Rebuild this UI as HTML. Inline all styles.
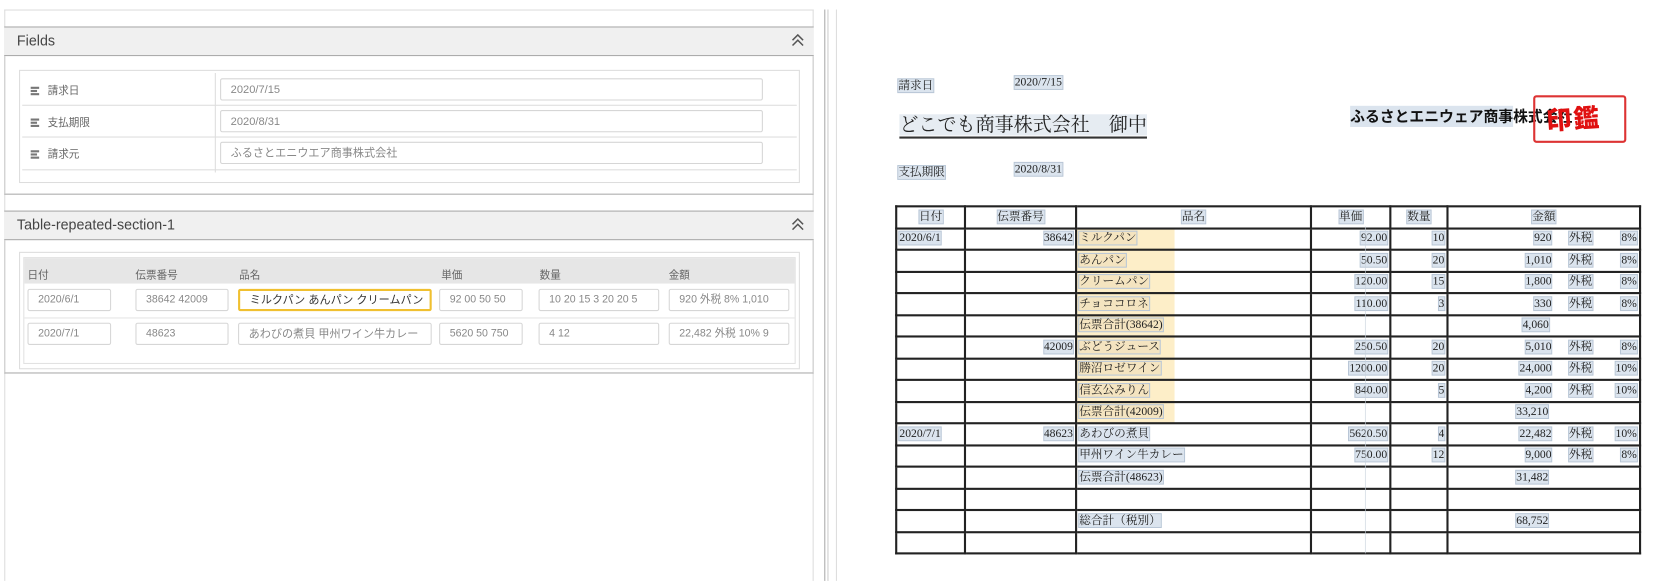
<!DOCTYPE html>
<html><head><meta charset="utf-8">
<style>
*{box-sizing:border-box;margin:0;padding:0}
body{width:1659px;height:577px;background:#fff;position:relative;overflow:hidden;font-family:"Liberation Sans","Noto Sans CJK JP",sans-serif;color:#555}
#w{position:absolute;left:0;top:0;width:1568px;height:546px;transform:scale(1.0581);transform-origin:0 0}
.abs{position:absolute}
.hdr{position:absolute;left:4px;width:765px;height:28px;background:#f0f0f0;border-top:1px solid #aaa;border-bottom:1px solid #aaa;font-size:13.5px;color:#444;padding:5px 12px}
.chev{position:absolute;right:9px;top:5px;width:12px;height:14px}
.inp{position:absolute;height:21px;border:1px solid #d6d6d6;border-radius:2px;font-size:10.5px;color:#888;padding:4px 9px 0;white-space:nowrap;overflow:hidden;background:#fff;line-height:12px}
.lbl{position:absolute;font-size:10px;color:#666}
.lbl i{display:inline-block;width:8px;height:8px;border-top:2px solid #777;border-bottom:2px solid #777;margin-right:8px;vertical-align:-1px;position:relative}
.lbl i:after{content:"";position:absolute;left:0;top:1px;width:6px;height:2px;background:#777}
.hl{position:absolute;height:1px;background:#ddd}
.doc{font-family:"Liberation Serif","Noto Serif CJK JP",serif;color:#222}
.b{background:#dbe4ee;outline:1px solid #b8c6d6}
table.t{position:absolute;left:846px;top:194px;border-collapse:collapse;font-family:"Liberation Serif","Noto Serif CJK JP",serif;font-size:11px;color:#222}
table.t td{border:2px solid #222;height:20.5px;padding:0 2px;white-space:nowrap;line-height:13px}
.r{text-align:right}.c{text-align:center}
.yy{background:linear-gradient(90deg,#fdeec8 92px,#fff 92px)}
.yy .b{background:#f4e4c0}
</style></head><body><div id="w">
<svg width="0" height="0" style="position:absolute"><defs><g id="ch"><path d="M1 7 L6 2 L11 7 M1 12 L6 7 L11 12" fill="none" stroke="#555" stroke-width="1.4"/></g></defs></svg>
<!-- left panel -->
<div class="abs" style="left:4px;top:9px;width:765px;height:540px;border:1px solid #ddd;border-bottom:none"></div>
<div class="hdr" style="top:25px">Fields<svg class="chev"><use href="#ch"/></svg></div>
<div class="abs" style="left:4px;top:53px;width:765px;height:131px;border-left:1px solid #ccc;border-right:1px solid #ccc;border-bottom:1px solid #aaa"></div>
<div class="abs" style="left:18px;top:66px;width:738px;height:107px;border:1px solid #ddd"></div>
<div class="abs" style="left:203px;top:69px;width:1px;height:94px;background:#ddd"></div>
<div class="hl" style="left:21px;top:99px;width:732px"></div>
<div class="hl" style="left:21px;top:129px;width:732px"></div>
<div class="hl" style="left:21px;top:160px;width:732px"></div>
<div class="lbl" style="left:29px;top:77px"><i></i>請求日</div>
<div class="lbl" style="left:29px;top:107px"><i></i>支払期限</div>
<div class="lbl" style="left:29px;top:137px"><i></i>請求元</div>
<div class="inp" style="left:208px;top:74px;width:513px">2020/7/15</div>
<div class="inp" style="left:208px;top:104px;width:513px">2020/8/31</div>
<div class="inp" style="left:208px;top:134px;width:513px">ふるさとエニウエア商事株式会社</div>

<div class="hdr" style="top:199px">Table-repeated-section-1<svg class="chev"><use href="#ch"/></svg></div>
<div class="abs" style="left:4px;top:227px;width:765px;height:126px;border-left:1px solid #ccc;border-right:1px solid #ccc;border-bottom:1px solid #aaa"></div>
<div class="abs" style="left:18px;top:238px;width:738px;height:111px;border:1px solid #ddd"></div>
<div class="abs" style="left:22px;top:243px;width:730px;height:101px;border:1px solid #e2e2e2"></div>
<div class="abs" style="left:23px;top:244px;width:728px;height:24px;background:#e6e6e6"></div>
<div class="hl" style="left:23px;top:300px;width:728px;background:#e4e4e4"></div>
<div class="lbl" style="left:26px;top:251px">日付</div>
<div class="lbl" style="left:128px;top:251px">伝票番号</div>
<div class="lbl" style="left:226px;top:251px">品名</div>
<div class="lbl" style="left:417px;top:251px">単価</div>
<div class="lbl" style="left:510px;top:251px">数量</div>
<div class="lbl" style="left:632px;top:251px">金額</div>
<div class="inp" style="left:26px;top:273px;width:79px;font-size:10px">2020/6/1</div>
<div class="inp" style="left:128px;top:273px;width:88px;font-size:10px">38642 42009</div>
<div class="inp" style="left:225px;top:273px;width:183px;border:2px solid #f0c030;color:#333;font-size:10.5px;padding-top:3px">ミルクパン あんパン クリームパン</div>
<div class="inp" style="left:415px;top:273px;width:79px;font-size:10px">92 00 50 50</div>
<div class="inp" style="left:509px;top:273px;width:114px;font-size:10px">10 20 15 3 20 20 5</div>
<div class="inp" style="left:632px;top:273px;width:114px;font-size:10px">920 外税 8% 1,010</div>
<div class="inp" style="left:26px;top:305px;width:79px;font-size:10px">2020/7/1</div>
<div class="inp" style="left:128px;top:305px;width:88px;font-size:10px">48623</div>
<div class="inp" style="left:225px;top:305px;width:183px;font-size:10.5px">あわびの煮貝 甲州ワイン牛カレー</div>
<div class="inp" style="left:415px;top:305px;width:79px;font-size:10px">5620 50 750</div>
<div class="inp" style="left:509px;top:305px;width:114px;font-size:10px">4 12</div>
<div class="inp" style="left:632px;top:305px;width:114px;font-size:10px">22,482 外税 10% 9</div>

<!-- separator -->
<div class="abs" style="left:779px;top:9px;width:1px;height:540px;background:#aaa"></div>
<div class="abs" style="left:782px;top:9px;width:1px;height:540px;background:#ccc"></div>
<div class="abs" style="left:790px;top:9px;width:1px;height:540px;background:#ddd"></div>

<!-- document -->
<div class="doc abs" style="left:849px;top:72px;font-size:11px"><span class="b">請求日</span></div>
<div class="doc abs" style="left:959px;top:72px;font-size:11px"><span class="b">2020/7/15</span></div>
<div class="doc abs" style="left:850px;top:107px;font-size:18px;border-bottom:2px solid #333;line-height:22px"><span style="background:#e6ecf2">どこでも商事株式会社　御中</span></div>
<div class="doc abs" style="left:849px;top:154px;font-size:11px"><span class="b">支払期限</span></div>
<div class="doc abs" style="left:959px;top:154px;font-size:11px"><span class="b">2020/8/31</span></div>
<div class="abs" style="left:1276px;top:101px;font-size:14px;font-weight:bold;color:#111;font-family:'Noto Sans CJK JP',sans-serif;line-height:18px;white-space:nowrap"><span style="background:#dbe4ee">ふるさとエニウェア商事</span>株式会社</div>
<div class="abs" style="left:1449px;top:90px;width:88px;height:45px;border:2px solid #d33;border-radius:3px"></div>
<div class="abs" style="left:1461px;top:96px;font-size:24px;color:#e01010;font-weight:900;font-family:'Noto Sans CJK JP',sans-serif;line-height:30px;letter-spacing:2px;transform:rotate(-4deg)">印鑑</div>

<table class="t">
<colgroup><col style="width:65px"><col style="width:105px"><col style="width:222px"><col style="width:75px"><col style="width:54px"><col style="width:182px"></colgroup>
<tr><td class="c"><span class="b">日付</span></td><td class="c"><span class="b">伝票番号</span></td><td class="c"><span class="b">品名</span></td><td class="c"><span class="b">単価</span></td><td class="c"><span class="b">数量</span></td><td class="c"><span class="b">金額</span></td></tr>
<tr><td><span class="b">2020/6/1</span></td><td class="r"><span class="b">38642</span></td><td class="yy"><span class="b">ミルクパン</span></td><td class="r"><span class="b">92.00</span></td><td class="r"><span class="b">10</span></td><td class="r"><span class="b">920</span>&nbsp;&nbsp;&nbsp;&nbsp;&nbsp;&nbsp;<span class="b">外税</span>&nbsp;&nbsp;&nbsp;&nbsp;&nbsp;&nbsp;&nbsp;&nbsp;&nbsp;&nbsp;<span class="b">8%</span></td></tr>
<tr><td></td><td></td><td class="yy"><span class="b">あんパン</span></td><td class="r"><span class="b">50.50</span></td><td class="r"><span class="b">20</span></td><td class="r"><span class="b">1,010</span>&nbsp;&nbsp;&nbsp;&nbsp;&nbsp;&nbsp;<span class="b">外税</span>&nbsp;&nbsp;&nbsp;&nbsp;&nbsp;&nbsp;&nbsp;&nbsp;&nbsp;&nbsp;<span class="b">8%</span></td></tr>
<tr><td></td><td></td><td class="yy"><span class="b">クリームパン</span></td><td class="r"><span class="b">120.00</span></td><td class="r"><span class="b">15</span></td><td class="r"><span class="b">1,800</span>&nbsp;&nbsp;&nbsp;&nbsp;&nbsp;&nbsp;<span class="b">外税</span>&nbsp;&nbsp;&nbsp;&nbsp;&nbsp;&nbsp;&nbsp;&nbsp;&nbsp;&nbsp;<span class="b">8%</span></td></tr>
<tr><td></td><td></td><td class="yy"><span class="b">チョココロネ</span></td><td class="r"><span class="b">110.00</span></td><td class="r"><span class="b">3</span></td><td class="r"><span class="b">330</span>&nbsp;&nbsp;&nbsp;&nbsp;&nbsp;&nbsp;<span class="b">外税</span>&nbsp;&nbsp;&nbsp;&nbsp;&nbsp;&nbsp;&nbsp;&nbsp;&nbsp;&nbsp;<span class="b">8%</span></td></tr>
<tr><td></td><td></td><td class="yy"><span class="b">伝票合計(38642)</span></td><td></td><td></td><td style="padding-left:70px"><span class="b">4,060</span></td></tr>
<tr><td></td><td class="r"><span class="b">42009</span></td><td class="yy"><span class="b">ぶどうジュース</span></td><td class="r"><span class="b">250.50</span></td><td class="r"><span class="b">20</span></td><td class="r"><span class="b">5,010</span>&nbsp;&nbsp;&nbsp;&nbsp;&nbsp;&nbsp;<span class="b">外税</span>&nbsp;&nbsp;&nbsp;&nbsp;&nbsp;&nbsp;&nbsp;&nbsp;&nbsp;&nbsp;<span class="b">8%</span></td></tr>
<tr><td></td><td></td><td class="yy"><span class="b">勝沼ロゼワイン</span></td><td class="r"><span class="b">1200.00</span></td><td class="r"><span class="b">20</span></td><td class="r"><span class="b">24,000</span>&nbsp;&nbsp;&nbsp;&nbsp;&nbsp;&nbsp;<span class="b">外税</span>&nbsp;&nbsp;&nbsp;&nbsp;&nbsp;&nbsp;&nbsp;&nbsp;<span class="b">10%</span></td></tr>
<tr><td></td><td></td><td class="yy"><span class="b">信玄公みりん</span></td><td class="r"><span class="b">840.00</span></td><td class="r"><span class="b">5</span></td><td class="r"><span class="b">4,200</span>&nbsp;&nbsp;&nbsp;&nbsp;&nbsp;&nbsp;<span class="b">外税</span>&nbsp;&nbsp;&nbsp;&nbsp;&nbsp;&nbsp;&nbsp;&nbsp;<span class="b">10%</span></td></tr>
<tr><td></td><td></td><td class="yy"><span class="b">伝票合計(42009)</span></td><td></td><td></td><td style="padding-left:64px"><span class="b">33,210</span></td></tr>
<tr><td><span class="b">2020/7/1</span></td><td class="r"><span class="b">48623</span></td><td><span class="b">あわびの煮貝</span></td><td class="r"><span class="b">5620.50</span></td><td class="r"><span class="b">4</span></td><td class="r"><span class="b">22,482</span>&nbsp;&nbsp;&nbsp;&nbsp;&nbsp;&nbsp;<span class="b">外税</span>&nbsp;&nbsp;&nbsp;&nbsp;&nbsp;&nbsp;&nbsp;&nbsp;<span class="b">10%</span></td></tr>
<tr><td></td><td></td><td><span class="b">甲州ワイン牛カレー</span></td><td class="r"><span class="b">750.00</span></td><td class="r"><span class="b">12</span></td><td class="r"><span class="b">9,000</span>&nbsp;&nbsp;&nbsp;&nbsp;&nbsp;&nbsp;<span class="b">外税</span>&nbsp;&nbsp;&nbsp;&nbsp;&nbsp;&nbsp;&nbsp;&nbsp;&nbsp;&nbsp;<span class="b">8%</span></td></tr>
<tr><td></td><td></td><td><span class="b">伝票合計(48623)</span></td><td></td><td></td><td style="padding-left:64px"><span class="b">31,482</span></td></tr>
<tr><td></td><td></td><td></td><td></td><td></td><td></td></tr>
<tr><td></td><td></td><td><span class="b">総合計（税別）</span></td><td></td><td></td><td style="padding-left:64px"><span class="b">68,752</span></td></tr>
<tr><td></td><td></td><td></td><td></td><td></td><td></td></tr>
</table>
<div class="abs" style="left:1290px;top:214px;width:1px;height:309px;background:#c8d2dc;opacity:.6"></div>
</div></body></html>
